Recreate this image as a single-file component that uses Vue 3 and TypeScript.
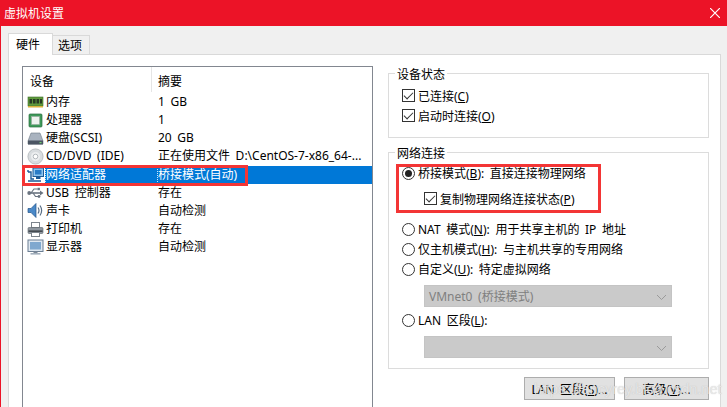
<script setup lang="ts">
interface Device { icon: string; name: string; summary: string; selected?: boolean }
const devices: Device[] = [
  { icon: 'ram', name: '内存', summary: '1 GB' },
  { icon: 'cpu', name: '处理器', summary: '1' },
  { icon: 'disk', name: '硬盘(SCSI)', summary: '20 GB' },
  { icon: 'cd', name: 'CD/DVD (IDE)', summary: '正在使用文件 D:\\CentOS-7-x86_64-...' },
  { icon: 'net', name: '网络适配器', summary: '桥接模式(自动)', selected: true },
  { icon: 'usb', name: 'USB 控制器', summary: '存在' },
  { icon: 'sound', name: '声卡', summary: '自动检测' },
  { icon: 'printer', name: '打印机', summary: '存在' },
  { icon: 'display', name: '显示器', summary: '自动检测' },
]
</script>

<template>
  <div class="window">
    <header class="titlebar">
      <span class="title">虚拟机设置</span>
      <svg class="close" width="10" height="10" viewBox="0 0 10 10"><path d="M0 0L10 10M10 0L0 10" stroke="#fff" stroke-width="1.2" /></svg>
    </header>
    <div class="body">
      <nav class="tabs">
        <div class="tab active">硬件</div>
        <div class="tab">选项</div>
      </nav>
      <section class="page">
        <div class="list">
          <div class="list-head">
            <div class="col-a">设备</div>
            <div class="col-b">摘要</div>
          </div>
          <div v-for="d in devices" :key="d.name" class="row">
            <svg class="ico" width="17" height="17" viewBox="0 0 17 17">
              <template v-if="d.icon === 'ram'">
                <rect x="1" y="3" width="15" height="9" fill="#5f9a3c" stroke="#3d6b2a" stroke-width=".6" />
                <rect x="2.5" y="5" width="2.6" height="4.5" fill="#263a22" />
                <rect x="6" y="5" width="2.6" height="4.5" fill="#263a22" />
                <rect x="9.5" y="5" width="2.6" height="4.5" fill="#263a22" />
                <rect x="13" y="5" width="2" height="4.5" fill="#263a22" />
                <rect x="1" y="12" width="15" height="1.5" fill="#d8b23a" />
              </template>
              <template v-else-if="d.icon === 'cpu'">
                <rect x="2" y="2" width="13" height="13" rx="1" fill="#3f9a5a" stroke="#2a6d40" stroke-width=".7" />
                <rect x="4.5" y="4.5" width="8" height="8" fill="#eef2ee" stroke="#9aaba0" stroke-width=".6" />
              </template>
              <template v-else-if="d.icon === 'disk'">
                <path d="M4 3H13L16 11V14H1V11Z" fill="#a9b3bf" stroke="#6d7885" stroke-width=".6" />
                <rect x="1" y="10.5" width="15" height="4" fill="#4b5563" />
                <rect x="12.5" y="12" width="2" height="1.2" fill="#6fd16f" />
              </template>
              <template v-else-if="d.icon === 'cd'">
                <circle cx="8.5" cy="8.5" r="7.6" fill="#d8dcdf" stroke="#a7adb2" stroke-width=".7" />
                <circle cx="8.5" cy="8.5" r="4.5" fill="#eceef0" />
                <circle cx="8.5" cy="8.5" r="2.3" fill="#fff" stroke="#9aa1a6" stroke-width=".7" />
              </template>
              <template v-else-if="d.icon === 'net'">
                <rect x="6" y="2" width="10.5" height="8.5" fill="#8fc4ee" stroke="#1c5a96" />
                <rect x="8" y="4" width="6.5" height="4.5" fill="#2a7cc7" />
                <path d="M1 6H4V13H7M1 6V4M1 15H14" stroke="#1c5a96" stroke-width="1.4" fill="none" />
                <rect x="9" y="11" width="4.5" height="2" fill="#1c5a96" />
              </template>
              <template v-else-if="d.icon === 'usb'">
                <path d="M1 9H14" stroke="#6a7480" stroke-width="1.6" />
                <path d="M4 9L7 5H10.5M6 9L8.5 12.5H11" stroke="#6a7480" stroke-width="1.2" fill="none" />
                <circle cx="2.2" cy="9" r="1.9" fill="#6a7480" />
                <path d="M13 6.5L16.5 9L13 11.5Z" fill="#6a7480" />
                <rect x="10.5" y="3.8" width="2.4" height="2.4" fill="#6a7480" />
                <circle cx="12" cy="12.5" r="1.4" fill="#6a7480" />
              </template>
              <template v-else-if="d.icon === 'sound'">
                <path d="M1 6.5H4L9 1.5V15.5L4 10.5H1Z" fill="#4a89c8" stroke="#24548a" stroke-width=".7" />
                <path d="M11 5.5Q13 8.5 11 11.5M13 3.5Q16.3 8.5 13 13.5" stroke="#5a6f86" stroke-width="1.2" fill="none" />
              </template>
              <template v-else-if="d.icon === 'printer'">
                <rect x="4.5" y="1.5" width="8" height="5" fill="#fff" stroke="#7d858d" />
                <rect x="1" y="6.5" width="15" height="6" rx="1" fill="#8f979f" stroke="#5c646c" stroke-width=".6" />
                <rect x="1.5" y="9.5" width="14" height="1.3" fill="#33393f" />
                <rect x="4.5" y="11.5" width="8" height="4" fill="#fff" stroke="#7d858d" />
              </template>
              <template v-else>
                <rect x="1" y="1" width="15" height="11.5" fill="#dfe8f1" stroke="#6c7f93" />
                <rect x="3" y="3" width="11" height="7.5" fill="#7fa8cf" />
                <rect x="6.5" y="12.5" width="4" height="1.5" fill="#7c8a99" />
                <rect x="3.5" y="14" width="10" height="1.6" fill="#a3b0bd" />
              </template>
            </svg>
            <div class="cells" :class="{ selected: d.selected }">
              <div class="col-a-text" :class="{ focused: d.selected }">{{ d.name }}</div>
              <div class="col-b-text">{{ d.summary }}</div>
            </div>
          </div>
        </div>
        <div class="side">
          <div class="group">
            <div class="legend">设备状态</div>
            <div class="group-body first">
              <div class="opt"><span class="check"></span>已连接(<u>C</u>)</div>
              <div class="opt"><span class="check"></span>启动时连接(<u>O</u>)</div>
            </div>
          </div>
          <div class="group net">
            <div class="legend">网络连接</div>
            <div class="group-body second">
              <div class="opt"><span class="radio on"></span>桥接模式(<u>B</u>): 直接连接物理网络</div>
              <div class="opt sub"><span class="check"></span>复制物理网络连接状态(<u>P</u>)</div>
              <div class="opt gap"><span class="radio"></span>NAT 模式(<u>N</u>): 用于共享主机的 IP 地址</div>
              <div class="opt"><span class="radio"></span>仅主机模式(<u>H</u>): 与主机共享的专用网络</div>
              <div class="opt"><span class="radio"></span>自定义(<u>U</u>): 特定虚拟网络</div>
              <div class="select">VMnet0 (桥接模式)<svg width="9" height="5" viewBox="0 0 9 5"><path d="M0 0L4.5 4.5L9 0" fill="none" stroke="#9a9a9a" /></svg></div>
              <div class="opt lan"><span class="radio"></span>LAN 区段(<u>L</u>):</div>
              <div class="select"><svg width="9" height="5" viewBox="0 0 9 5"><path d="M0 0L4.5 4.5L9 0" fill="none" stroke="#9a9a9a" /></svg></div>
            </div>
          </div>
          <div class="buttons">
            <div class="btn wide">LAN 区段(<u>S</u>)...</div>
            <div class="btn">高级(<u>V</u>)...</div>
          </div>
        </div>
      </section>
    </div>
    <div class="mark left-mark"></div>
    <div class="mark right-mark"></div>
    <div class="watermark">https://fancyrey.blog.csdn.net</div>
  </div>
</template>

<style scoped>
.window {
  position: relative;
  width: 727px;
  height: 407px;
  box-sizing: border-box;
  border-left: 1px solid #ec1327;
  overflow: hidden;
  display: flex;
  flex-direction: column;
  background: #f0f0f0;
  color: #000;
  font: 12px/18px "Noto Sans", "Noto Sans CJK SC", sans-serif;
  word-spacing: 2.5px;
}
.titlebar {
  flex: none;
  height: 26px;
  margin-left: -1px;
  padding: 0 7px 0 4px;
  display: flex;
  align-items: center;
  justify-content: space-between;
  background: #ec1327;
  color: #fff;
}
.title {
  padding-top: 2px;
}
.body {
  flex: 1;
  min-height: 0;
  padding: 7px 6px 0 7px;
  display: flex;
  flex-direction: column;
}
.tabs {
  display: flex;
  align-items: flex-end;
  height: 22px;
  flex: none;
  position: relative;
  z-index: 1;
  margin-bottom: -1px;
}
.tab {
  width: 37px;
  height: 20px;
  box-sizing: border-box;
  border: 1px solid #d9d9d9;
  border-left: 0;
  padding-left: 5px;
  line-height: 20px;
}
.tab.active {
  width: 45px;
  height: 22px;
  border: 1px solid #d9d9d9;
  border-bottom: 0;
  background: #fff;
  padding-left: 7px;
  line-height: 22px;
}
.page {
  flex: 1;
  min-height: 0;
  background: #fff;
  border: 1px solid #d9d9d9;
  border-bottom: 0;
  padding: 11px 11px 0 13px;
  display: flex;
  gap: 15px;
}
.list {
  flex: none;
  width: 351px;
  height: 360px;
  box-sizing: border-box;
  border: 1px solid #828790;
  border-bottom: 0;
}
.list-head {
  display: flex;
  height: 26px;
  line-height: 30px;
}
.col-a {
  width: 129px;
  box-sizing: border-box;
  height: 25px;
  padding-left: 7px;
  border-right: 1px solid #e5e5e5;
}
.col-b {
  padding-left: 6px;
}
.row {
  display: flex;
  align-items: center;
  height: 18.15px;
  padding-left: 4px;
  white-space: nowrap;
}
.ico {
  flex: none;
  margin-right: 1px;
}
.cells {
  flex: 1;
  display: flex;
  height: 18px;
  line-height: 18px;
}
.cells.selected {
  background: #0078d7;
  color: #fff;
}
.col-a-text {
  width: 113px;
  box-sizing: border-box;
  padding-left: 1px;
}
.col-a-text.focused {
  outline: 1px dotted #cfe4f7;
  outline-offset: -1px;
}
.side {
  flex: none;
  width: 321px;
  padding-top: 7px;
}
.group {
  border: 1px solid #dcdcdc;
}
.group.net {
  margin-top: 14px;
}
.legend {
  width: fit-content;
  height: 16px;
  line-height: 18px;
  margin: -8px 0 0 6px;
  padding: 0 2px;
  background: #fff;
}
.group-body {
  padding-left: 13px;
}
.group-body.first {
  padding-top: 4px;
  padding-bottom: 11px;
}
.group-body.second {
  padding-top: 2px;
  padding-bottom: 10px;
}
.opt {
  display: flex;
  align-items: center;
  box-sizing: border-box;
  height: 20px;
  padding-top: 2px;
  white-space: pre;
}
.opt.sub {
  margin: 6px 0 0 22px;
}
.opt.gap {
  margin-top: 10px;
}
.opt.lan {
  margin-top: 3px;
}
.check,
.radio {
  flex: none;
  width: 13px;
  height: 13px;
  box-sizing: border-box;
  margin: -2px 3px 0 0;
  border: 1px solid #333;
  background: #fff;
  position: relative;
}
.check {
  margin-top: -4px;
}
.check::after {
  content: "";
  position: absolute;
  left: 3px;
  top: 0;
  width: 4px;
  height: 8px;
  border: solid #333;
  border-width: 0 1.3px 1.3px 0;
  transform: rotate(45deg);
}
.radio {
  border-radius: 50%;
}
.radio.on::after {
  content: "";
  position: absolute;
  left: 2px;
  top: 2px;
  width: 7px;
  height: 7px;
  border-radius: 50%;
  background: #222;
}
.select {
  display: flex;
  align-items: center;
  justify-content: space-between;
  box-sizing: border-box;
  width: 248px;
  height: 22px;
  margin: 6px 0 0 22px;
  padding: 2px 5px 0 4px;
  background: #cacaca;
  border: 1px solid #c4c4c4;
  color: #808080;
}
.select svg {
  margin-left: auto;
}
.buttons {
  display: flex;
  justify-content: flex-end;
  gap: 9px;
  margin-top: 8px;
}
.btn {
  box-sizing: border-box;
  width: 85px;
  height: 23px;
  text-align: center;
  line-height: 23px;
  background: #e1e1e1;
  border: 1px solid #adadad;
}
.btn.wide {
  width: 91px;
}
.close {
  flex: none;
}
.mark {
  position: absolute;
  border: 3px solid #f33535;
  box-sizing: border-box;
  pointer-events: none;
}
.left-mark {
  left: 21px;
  top: 165px;
  width: 226px;
  height: 21px;
}
.right-mark {
  left: 395px;
  top: 164px;
  width: 205px;
  height: 49px;
}
.watermark {
  position: absolute;
  left: 533px;
  top: 379px;
  font: 14.5px/20px "Liberation Sans", sans-serif;
  color: rgba(236, 236, 236, 0.85);
  text-shadow: 0 0 1px rgba(150, 150, 150, 0.5);
  pointer-events: none;
  white-space: nowrap;
  word-spacing: 0;
}
</style>
